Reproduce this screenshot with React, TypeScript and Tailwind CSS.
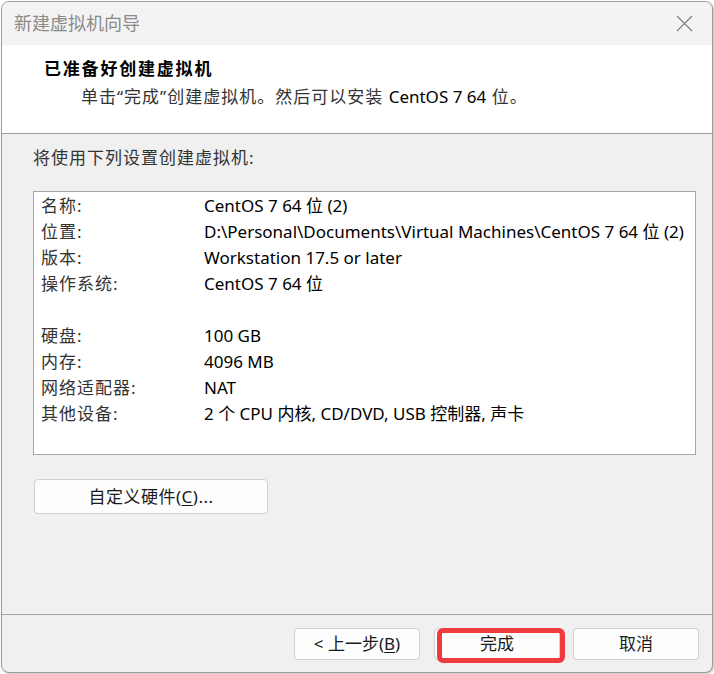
import React from 'react';

type Row = { label: string; value: string } | null;

const rows: Row[] = [
  { label: '名称:', value: 'CentOS 7 64 位 (2)' },
  { label: '位置:', value: 'D:\\Personal\\Documents\\Virtual Machines\\CentOS 7 64 位 (2)' },
  { label: '版本:', value: 'Workstation 17.5 or later' },
  { label: '操作系统:', value: 'CentOS 7 64 位' },
  null,
  { label: '硬盘:', value: '100 GB' },
  { label: '内存:', value: '4096 MB' },
  { label: '网络适配器:', value: 'NAT' },
  { label: '其他设备:', value: '2 个 CPU 内核, CD/DVD, USB 控制器, 声卡' },
];

const WizardButton: React.FC<{ children: React.ReactNode; className?: string }> = ({ children, className = '' }) => (
  <button
    className={`relative h-[32px] w-[126px] rounded-[4px] border border-[#d0d0d0] bg-[#fdfdfd] text-[17px] text-[#1a1a1a] ${className}`}
  >
    {children}
  </button>
);

export default function App() {
  return (
    <div className="h-[674px] w-[714px] bg-white p-[1px] font-['Noto_Sans','Noto_Sans_CJK_SC',sans-serif]">
      <div className="flex h-[672px] w-[712px] flex-col overflow-hidden rounded-[8px] border border-[#9c9c9c] bg-[#f0f0f0] shadow-[1px_1px_2px_rgba(0,0,0,0.25)]">
        {/* Title bar */}
        <div className="flex h-[43px] shrink-0 items-center justify-between bg-[#f3f3f3] pl-[12px] pr-[19px]">
          <span className="text-[18px] text-[#8a8a8a]">新建虚拟机向导</span>
          <svg width="17" height="17" viewBox="0 0 17 17" fill="none">
            <path d="M1 1L16 16M16 1L1 16" stroke="#7c7c7c" strokeWidth="1.1" />
          </svg>
        </div>

        {/* Page header */}
        <div className="h-[89px] shrink-0 border-b border-[#a0a0a0] bg-white pl-[42px] pt-[12px]">
          <div className="text-[17px] font-bold leading-[24px] tracking-[1.8px] text-black">已准备好创建虚拟机</div>
          <div className="mt-[4px] pl-[37px] text-[17px] leading-[24px] tracking-[1px] text-[#333]">
            单击“完成”创建虚拟机。然后可以安装 <span className="tracking-normal text-black">CentOS 7 64</span> 位。
          </div>
        </div>

        {/* Summary */}
        <div className="flex flex-1 flex-col pl-[31px] pr-[16px] pt-[12px]">
          <div className="text-[17px] leading-[24px] tracking-[1px] text-[#333]">将使用下列设置创建虚拟机:</div>
          <div className="mt-[21px] h-[264px] border border-[#a7a7a7] bg-white pl-[7px] pt-[1px]">
            {rows.map((row, i) =>
              row ? (
                <div key={i} className="flex h-[26px] items-center text-[17px] whitespace-nowrap">
                  <span className="w-[163px] shrink-0 tracking-[1px] text-[#333]">{row.label}</span>
                  <span className="text-black">{row.value}</span>
                </div>
              ) : (
                <div key={i} className="h-[26px]" />
              )
            )}
          </div>
          <button className="ml-[1px] mt-[24px] h-[35px] w-[234px] rounded-[4px] border border-[#d0d0d0] bg-[#fdfdfd] text-[17px] tracking-[0.5px] text-[#1a1a1a]">
            自定义硬件(<span className="underline underline-offset-2">C</span>)...
          </button>
        </div>

        {/* Footer */}
        <div className="flex h-[58px] shrink-0 items-start justify-end border-t border-[#a0a0a0] pr-[13px] pt-[13px]">
          <WizardButton>
            &lt; 上一步(<span className="underline underline-offset-2">B</span>)
          </WizardButton>
          <WizardButton className="ml-[14px]">
            完成
            <span className="pointer-events-none absolute left-[2px] top-[-1px] h-[35px] w-[128px] rounded-[6px] border-[5px] border-[#ef3b3e]" />
          </WizardButton>
          <WizardButton className="ml-[13px]">取消</WizardButton>
        </div>
      </div>
    </div>
  );
}
